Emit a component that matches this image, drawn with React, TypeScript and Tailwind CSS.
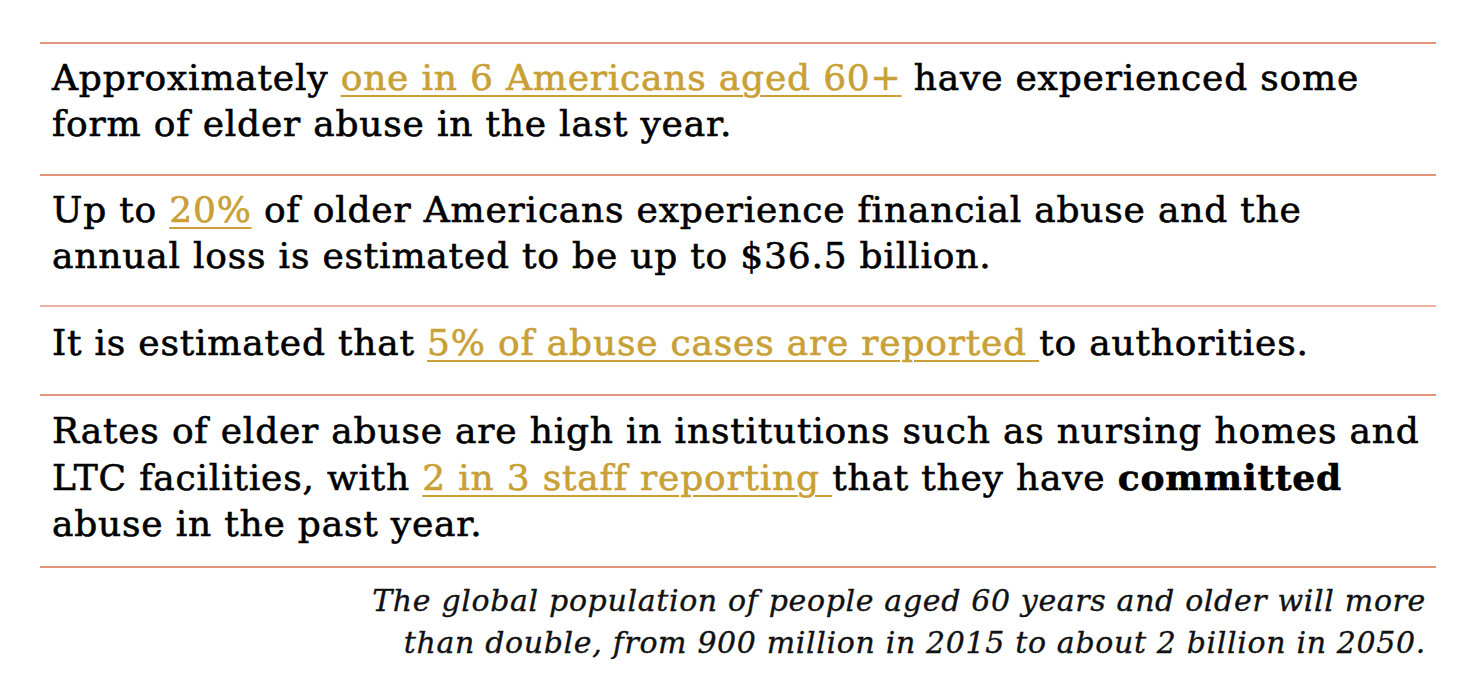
import React from 'react';

const Hl: React.FC<{ children: React.ReactNode }> = ({ children }) => (
  <span className="text-[#c9a035] underline decoration-2 underline-offset-[5px] [-webkit-text-stroke:0.6px_#c9a035]">{children}</span>
);

const Row: React.FC<{ children: React.ReactNode; className?: string }> = ({ children, className = '' }) => (
  <div className={`border-b-2 pl-3 ${className}`}>
    <p className="text-[36px] leading-[46px] tracking-[0.8px] text-black [-webkit-text-stroke:0.6px_black]">{children}</p>
  </div>
);

export default function App() {
  return (
    <div className="w-[1474px] h-[674px] bg-white overflow-hidden" style={{ fontFamily: '"DejaVu Serif", serif' }}>
      <div className="mx-[40px] w-[1396px] pt-[42px]">
        <div className="border-t-2 border-[#e09479]" />
        <Row className="pt-[11px] pb-[27px] border-[#e09479]">
          Approximately <Hl>one in 6 Americans aged 60+</Hl> have experienced some form of elder abuse in the last year.
        </Row>
        <Row className="pt-[11px] pb-[26px] border-[#e9b2a2]">
          Up to <Hl>20%</Hl> of older Americans experience financial abuse and the annual loss is estimated to be up to $36.5 billion.
        </Row>
        <Row className="pt-[13px] pb-[28px] border-[#e09479]">
          It is estimated that <Hl>5% of abuse cases are reported </Hl>to authorities.
        </Row>
        <Row className="pt-[12px] pb-[19px] border-[#e09479]">
          Rates of elder abuse are high in institutions such as nursing homes and LTC facilities, with{' '}
          <Hl>2 in 3 staff reporting </Hl>that they have <b>committed</b> abuse in the past year.
        </Row>
        <p className="pt-[12px] pr-[10px] text-right italic text-[30px] leading-[42px] tracking-[0.65px] text-[#111] [-webkit-text-stroke:0.35px_#111]">
          The global population of people aged 60 years and older will more
          <br />
          than double, from 900 million in 2015 to about 2 billion in 2050.
        </p>
      </div>
    </div>
  );
}
